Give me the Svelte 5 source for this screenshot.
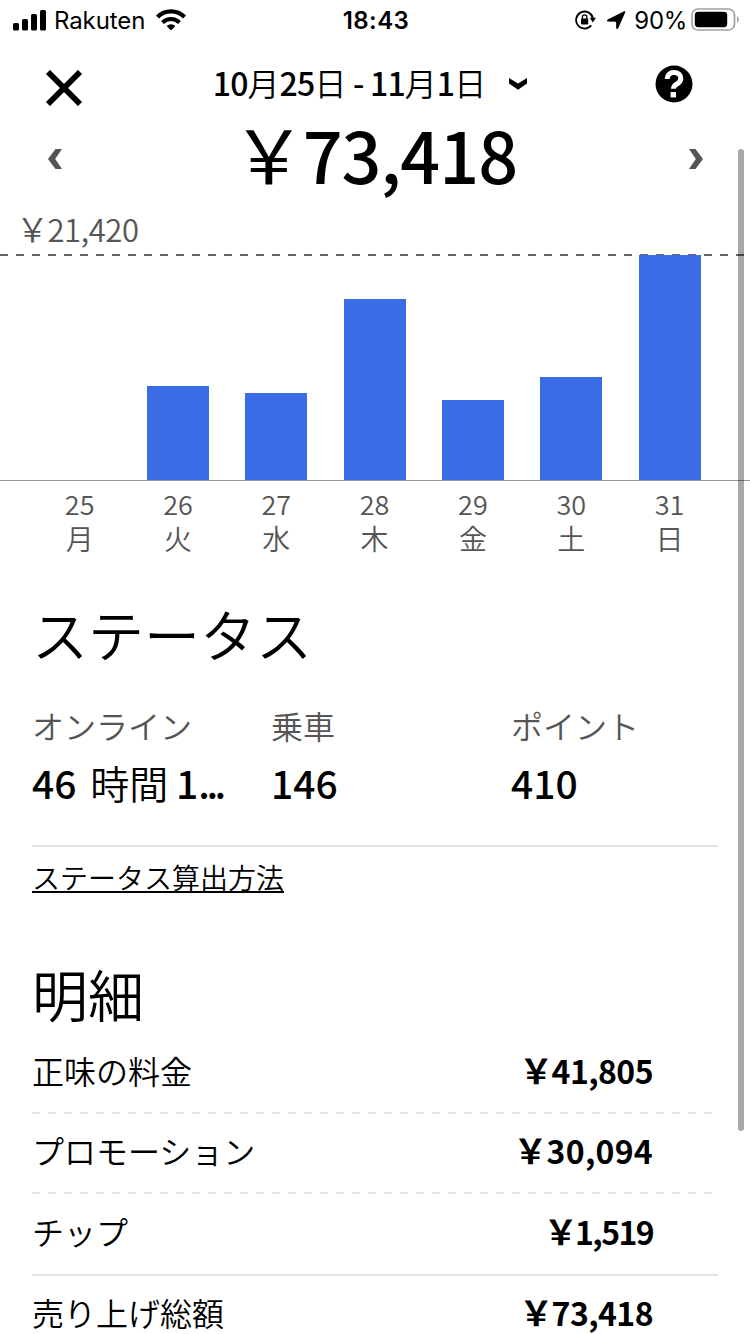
<script lang="ts">
    const days = [
        { date: 25, day: "月", height: 0 },
        { date: 26, day: "火", height: 94 },
        { date: 27, day: "水", height: 87 },
        { date: 28, day: "木", height: 181 },
        { date: 29, day: "金", height: 80 },
        { date: 30, day: "土", height: 103 },
        { date: 31, day: "日", height: 225 },
    ];

    const stats = [
        { label: "オンライン", value: ["46 ", "時間", " 1", "..."] },
        { label: "乗車", value: ["146"] },
        { label: "ポイント", value: ["410"] },
    ];

    const breakdown = [
        { label: "正味の料金", amount: "41,805", line: "dashed" },
        { label: "プロモーション", amount: "30,094", line: "dashed" },
        { label: "チップ", amount: "1,519", line: "solid" },
        { label: "売り上げ総額", amount: "73,418", line: "" },
    ];

    const period = ["10", "月", "25", "日", " - ", "11", "月", "1", "日"];

    // full-width yen sign
    const yen = "\uFFE5";

    const isKanji = (part: string) => /[月日時間]/.test(part);

    function tracking(amount: string) {
        const ones = amount.split("1").length - 1;
        return `${((4 - 5 * ones) / amount.length - 0.4).toFixed(2)}px`;
    }
</script>

<div class="screen">
    <div class="statusBar">
        <div class="carrier">
            <svg width="34" height="22" viewBox="0 0 34 22">
                <rect x="0" y="14" width="6" height="7.5" rx="1.6" />
                <rect x="9" y="10" width="6" height="11.5" rx="1.6" />
                <rect x="18" y="5" width="6" height="16.5" rx="1.6" />
                <rect x="27" y="1" width="6" height="20.5" rx="1.6" />
            </svg>
            <span class="carrierName">Rakuten</span>
            <svg width="30" height="22" viewBox="0 0 30 22">
                <path d="M15 21.5l-4.4-4.4a6.4 6.4 0 0 1 8.8 0z" />
                <path d="M6.6 13.6a11.6 11.6 0 0 1 16.8 0" fill="none" stroke="#000" stroke-width="3.9" />
                <path d="M1.5 8a18.9 18.9 0 0 1 27 0" fill="none" stroke="#000" stroke-width="4.2" />
            </svg>
        </div>
        <span class="clock">18:43</span>
        <div class="indicators">
            <svg class="lock" width="22" height="20" viewBox="0 0 22 20">
                <path d="M17.9 8.2A8.5 8.5 0 1 0 16.2 15.4" fill="none" stroke="#000" stroke-width="1.8" />
                <path d="M14.8 7.8h6.2l-3.2 4.6z" />
                <rect x="6" y="8.4" width="7.2" height="6" rx="0.8" />
                <path d="M7.4 9V7a2.2 2.2 0 0 1 4.4 0v2" fill="none" stroke="#000" stroke-width="1.3" />
            </svg>
            <svg class="arrow" width="19" height="19" viewBox="0 0 19 19">
                <path d="M17.2.3L.7 8.6c-1 .6-.8 2 .4 2l7.3.1c.5 0 .7.2.7.7l.1 5.6c.1 1.3 1.4 1.5 2 .3L18.3 1.2c.3-.7-.3-1.3-1.1-.9z" />
            </svg>
            <span class="percent">90%</span>
            <svg width="48" height="24" viewBox="0 0 48 24">
                <rect x="1" y="1" width="42.5" height="21" rx="6" fill="none" stroke="#a2a2a2" stroke-width="1.7" />
                <rect x="3.8" y="3.8" width="32.4" height="15.4" rx="3.4" />
                <path d="M46 8.3c2.4 1 2.4 5.6 0 6.6z" fill="#a2a2a2" />
            </svg>
        </div>
    </div>

    <div class="header">
        <svg class="close" width="36" height="36" viewBox="0 0 36 36">
            <path d="M2 2l32 32M34 2L2 34" stroke="#000" stroke-width="5.8" />
        </svg>
        <div class="period">
            <span class="periodText"
                >{#each period as part}<span class={isKanji(part) ? "kanji" : "digits"}>{part}</span>{/each}</span
            >
            <svg width="18" height="12" viewBox="0 0 18 12">
                <path d="M0 0l9 5.6L18 0v5.4l-9 6.4-9-6.4z" />
            </svg>
        </div>
        <svg class="help" width="38" height="38" viewBox="0 0 38 38">
            <circle cx="19" cy="19" r="18.5" />
            <path
                d="M12.2 13.9C12.2 10 14.8 7.4 19 7.4s6.8 2.4 6.8 6.1c0 3-1.6 4.3-4.1 5.7-1.8 1-3.2 1.7-3.2 4.6"
                fill="none"
                stroke="#fff"
                stroke-width="5"
            />
            <rect x="15.6" y="27" width="5.4" height="5.4" fill="#fff" />
        </svg>
    </div>

    <div class="total">
        <svg width="14" height="20" viewBox="0 0 14 20">
            <path d="M7.5 0H14L7.2 10 14 20H7.5L0 10z" fill="#555" />
        </svg>
        <div class="totalAmount"><span class="yen">{yen}</span>73,418</div>
        <svg width="14" height="20" viewBox="0 0 14 20">
            <path d="M6.5 0H0l6.8 10L0 20h6.5L14 10z" fill="#555" />
        </svg>
    </div>

    <div class="peak"><span class="yen">{yen}</span>21,420</div>
    <div class="chart">
        {#each days as { height }}
            <div class="bar" style:height={`${height}px`}></div>
        {/each}
    </div>
    <div class="days">
        {#each days as { date, day }}
            <div class="day">
                <span class="date">{date}</span>
                <span>{day}</span>
            </div>
        {/each}
    </div>

    <section class="status">
        <h2>ステータス</h2>
        <div class="stats">
            {#each stats as { label, value }}
                <div class="stat">
                    <div class="statLabel">{label}</div>
                    <div class="statValue">
                        {#each value as part}<span
                                class:kanji={isKanji(part)}
                                class:dots={part === "..."}>{part}</span
                            >{/each}
                    </div>
                </div>
            {/each}
        </div>
        <div class="method"><span>ステータス算出方法</span></div>
    </section>

    <section class="breakdown">
        <h2>明細</h2>
        {#each breakdown as { label, amount, line }}
            <div class="row">
                <span>{label}</span>
                <span class="amount" style:letter-spacing={tracking(amount)}
                    ><span class="yen">{yen}</span>{amount}</span
                >
            </div>
            {#if line}
                <div class={["line", line]}></div>
            {/if}
        {/each}
    </section>

    <div class="scrollbar"></div>
</div>

<style>
    :global(body) {
        background: #fff;
    }

    .screen {
        position: relative;
        width: 750px;
        height: 1334px;
        overflow: hidden;
        background: #fff;
        color: #000;
        font-family: "Noto Sans CJK JP", sans-serif;
        font-weight: 350;
    }

    svg {
        display: block;
        flex: none;
    }

    .statusBar {
        display: grid;
        grid-template-columns: 1fr auto 1fr;
        align-items: center;
        height: 40px;
        padding: 0 11px 0 13px;
        font-family: Inter, sans-serif;
        font-size: 24px;
        font-weight: 400;
    }

    .carrier,
    .indicators {
        display: flex;
        align-items: center;
    }

    .carrierName {
        margin: 1px 11px 0 7px;
        letter-spacing: -0.1px;
    }

    .clock {
        font-weight: 600;
        letter-spacing: 0.4px;
        margin-top: 1px;
    }

    .indicators {
        justify-content: flex-end;
    }

    .lock {
        margin-right: 10px;
    }

    .arrow {
        margin-right: 8px;
    }

    .percent {
        margin: 1px 4px 0 0;
        letter-spacing: -0.3px;
    }

    .header {
        display: flex;
        justify-content: space-between;
        align-items: center;
        height: 88px;
        padding: 0 57px 0 46px;
    }

    .close {
        margin-top: 8px;
    }

    .period {
        display: flex;
        align-items: center;
        gap: 23px;
        margin-left: 3px;
        font-size: 32px;
        line-height: 40px;
        font-weight: 500;
    }

    .periodText {
        padding-bottom: 5px;
        white-space: pre;
    }

    .digits {
        letter-spacing: -0.8px;
    }

    .kanji {
        font-weight: 350;
    }

    .total {
        display: flex;
        justify-content: space-between;
        align-items: center;
        height: 62px;
        padding: 0 47px 0 48px;
    }

    .totalAmount {
        padding-bottom: 11px;
        font-size: 70px;
        line-height: 62px;
        font-weight: 500;
        letter-spacing: -1px;
    }

    .yen {
        font-size: 1.06em;
        line-height: 0;
        margin: 0 -0.03em;
    }

    .totalAmount .yen {
        font-weight: 400;
    }

    .peak {
        height: 50px;
        padding: 14px 0 0 17px;
        font-size: 31px;
        line-height: 49px;
        letter-spacing: -0.4px;
        color: #555;
    }

    .chart {
        display: grid;
        grid-template-columns: repeat(7, 1fr);
        align-items: end;
        justify-items: center;
        height: 226px;
        padding: 0 31.3px 0 30.5px;
        border-bottom: 1px solid #999;
        background: repeating-linear-gradient(90deg, #666 0 8px, transparent 8px 16px) top / 100% 2px no-repeat;
    }

    .bar {
        width: 62px;
        background: #3a6de5;
    }

    .days {
        display: grid;
        grid-template-columns: repeat(7, 1fr);
        padding: 6px 31.3px 2px 30.5px;
        font-size: 28px;
        line-height: 34px;
        color: #555;
    }

    .day {
        display: flex;
        flex-direction: column;
        align-items: center;
    }

    .date {
        font-size: 27px;
    }

    section {
        padding: 0 32px;
    }

    h2 {
        margin: 0 0 8px;
        font-size: 56px;
        line-height: 72px;
        font-weight: 350;
    }

    .status h2 {
        margin-top: 40px;
    }

    .breakdown h2 {
        margin-bottom: 5px;
    }

    .stats {
        display: grid;
        grid-template-columns: 239px 240px 1fr;
        height: 168px;
        border-bottom: 2px solid #e2e2e2;
    }

    .stat {
        padding-top: 23px;
    }

    .statLabel {
        font-size: 32px;
        line-height: 50px;
        color: #555;
    }

    .statValue {
        display: flex;
        font-size: 39px;
        line-height: 64px;
        font-weight: 500;
        white-space: pre;
    }

    .statValue .kanji {
        margin: 0 -1px 0 5px;
    }

    .dots {
        letter-spacing: -3.5px;
    }

    .method {
        height: 110px;
        font-size: 28px;
        line-height: 60px;
    }

    .method span {
        display: inline-block;
        line-height: 28px;
        border-bottom: 2px solid #000;
    }

    .row {
        display: flex;
        justify-content: space-between;
        align-items: center;
        height: 71px;
        padding: 0 65px 7px 0;
        font-size: 32px;
    }

    .row:has(+ .solid) {
        height: 73px;
    }

    .amount {
        font-weight: 700;
    }

    .line {
        height: 2px;
    }

    .line.dashed {
        background: repeating-linear-gradient(90deg, #e2e2e2 0 8px, transparent 8px 16px);
    }

    .line.solid {
        background: #e2e2e2;
    }

    .scrollbar {
        position: absolute;
        top: 149px;
        left: 738px;
        width: 6px;
        height: 982px;
        border-radius: 3px;
        background: rgba(0, 0, 0, 0.34);
    }
</style>
